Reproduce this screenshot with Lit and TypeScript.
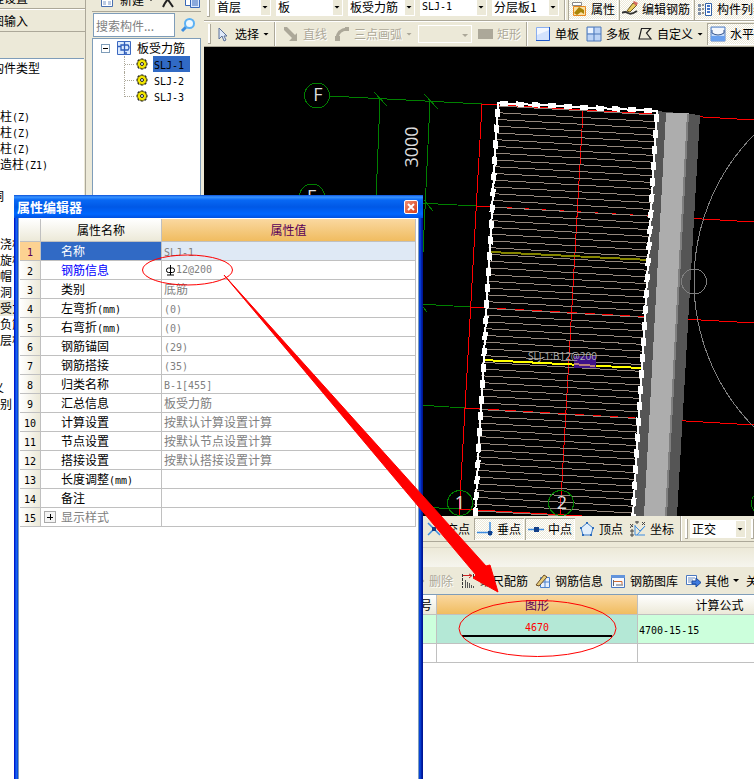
import { LitElement, html, svg, css, nothing, TemplateResult } from "lit";
import { customElement } from "lit/decorators.js";
import { classMap } from "lit/directives/class-map.js";

/** Wraps Latin runs so that they take half the width of a Chinese character. */
const mixed = (text: string) =>
  text
    .split(/([\x21-\x7e]+)/)
    .filter((s) => s !== "")
    .map((s) => (/^[\x21-\x7e]/.test(s) ? html`<span class="latin">${s}</span>` : s));

const base = css`
  * {
    box-sizing: border-box;
  }
  :host {
    font: 12px/16px "Noto Sans CJK SC", "Liberation Sans", sans-serif;
    color: #000;
  }
  .latin {
    font-family: "DejaVu Sans Mono", "Liberation Mono", monospace;
    font-size: 10px;
    line-height: 12px;
  }
  button,
  select,
  input {
    font: inherit;
    color: inherit;
    margin: 0;
    padding: 0;
    border: 0;
    border-radius: 0;
    background: none;
  }
  svg {
    display: block;
    flex: none;
  }
  table {
    border-collapse: separate;
    border-spacing: 0;
    table-layout: fixed;
  }
  th {
    font-weight: normal;
  }
`;

const bars = css`
  .bar {
    display: flex;
    align-items: center;
    gap: 1px;
    background: #ece9d8;
    white-space: nowrap;
    overflow: hidden;
    flex: none;
  }
  .tool {
    display: flex;
    align-items: center;
    gap: 4px;
    height: 22px;
    padding: 0 3px;
    flex: none;
  }
  .tool.on {
    background: repeating-conic-gradient(#fff 0 25%, #ece9d8 0 50%) 0 0 / 2px 2px;
    box-shadow: inset 1px 1px 0 #aca899, inset -1px -1px 0 #fff;
  }
  .tool:disabled {
    color: #aca899;
    text-shadow: 1px 1px 0 #fff;
  }
  .caret {
    width: 6px;
    height: 3px;
    background: currentColor;
    clip-path: polygon(0 0, 100% 0, 50% 100%);
  }
  .sep {
    align-self: stretch;
    width: 2px;
    background: #aca899;
    border-right: 1px solid #fff;
    flex: none;
  }
  .grip {
    width: 3px;
    height: 20px;
    border: 1px solid #aca899;
    border-width: 0 1px 1px 0;
    background: #fff;
    flex: none;
  }
  .combo {
    position: relative;
    display: flex;
    align-items: center;
    height: 18px;
    background: #fff;
    flex: none;
  }
  .combo select {
    appearance: none;
    width: 100%;
    height: 16px;
    padding-left: 2px;
  }
  .combo select.latin {
    font-size: 10px;
  }
  .combo::after {
    content: "";
    position: absolute;
    right: 1px;
    top: 1px;
    bottom: 1px;
    width: 9px;
    background: #ece9d8;
    pointer-events: none;
  }
  .combo .caret {
    position: absolute;
    right: 3px;
    top: 8px;
    z-index: 1;
    pointer-events: none;
  }
  .combo.empty {
    background: #ece9d8;
    border: 1px solid #fff;
    color: #aca899;
  }
`;

const icon = (name: string): TemplateResult => {
  const shapes: Record<string, TemplateResult> = {
    cursor: svg`<path d="M4 2v11l3-3 2 5 2-1-2-4h3z" fill="#dfe9fa" stroke="#5a7098"/>`,
    line: svg`<path d="M1 1l3 0 8 8 2-2v8H6l3-3-8-8z" fill="#aca899"/>`,
    arc: svg`<path d="M3 12Q4 4 13 3" fill="none" stroke="#aca899" stroke-width="3"/><path d="M1 10h5v5H1zM11 1h4v4h-4z" fill="#aca899"/>`,
    rect: svg`<path d="M1 3h15v10H1z" fill="#aca899"/>`,
    slab: svg`<path d="M1.500 1.500h13v13h-13z" fill="#f4f8ff" stroke="#8aaef0"/><path d="M2 14V9l12-5v10z" fill="#d4e3fd"/><path d="M14.500 1v13.500H1" fill="none" stroke="#2058c8"/>`,
    slabs: svg`<path d="M1 1h14v14H1z" fill="#bcd3f5" stroke="#4c78ba"/><path d="M2 2h5v5H2z" fill="#eef5ff"/><path d="M8 1v14M1 8h14" stroke="#4c78ba"/>`,
    poly: svg`<path d="M4.500 2.500h9l-4 4.500 4.500 6h-12z" fill="none" stroke="#222" stroke-width="1.200"/>`,
    level: svg`<path d="M1 1h14v14H1z" fill="#c6dcfb" stroke="#5880c0"/><path d="M1 10h14v5H1z" fill="#6aa0ee"/><path d="M2 2h12v5q-6 4-12 0z" fill="#f4f7fd"/><path d="M2 4v3q6 4 12 0V4" fill="none" stroke="#35558c"/>`,
    props: svg`<path d="M1.500 1.500h9v3h-9z" fill="#fff" stroke="#888"/><path d="M2.500 5.500h12v9h-12z" fill="#fbe0a0" stroke="#e88820"/><path d="M3 12l5-6 5 3v4l-3-2-4 3z" fill="#a88408"/>`,
    edit: svg`<path d="M0 12q3-2 6 0t9-2" fill="none" stroke="#333" stroke-width="2"/><path d="M5 10l6-8 4 2-7 7z" fill="#e8cc60" stroke="#6c5820"/><path d="M11 1l1-1 4 2-2 3z" fill="#d66a60"/>`,
    list: svg`<path d="M8.500 2.500h6v12h-6z" fill="#fff" stroke="#3262a8"/><path d="M10 5h3M10 8h3M10 11h3" stroke="#4274c8" stroke-width="2"/><path d="M1 3h3v3H1zM1 7h3v3H1zM1 11h3v3H1z" fill="#8090a8"/><path d="M5 4h2M5 8h2M5 12h2" stroke="#333"/>`,
    cross: svg`<path d="M2 2l12 12M14 2L2 14" stroke="#3c8ce0" stroke-width="1.500"/><path d="M6 6h4v4H6z" fill="#123f88"/>`,
    perp: svg`<path d="M13 1v14M0 11.500h16" stroke="#3c8ce0" stroke-width="1.500"/><path d="M11 10h4v4h-4z" fill="#123f88"/>`,
    mid: svg`<path d="M0 8.500h16" stroke="#3c8ce0" stroke-width="1.500"/><path d="M6 6h5v5H6z" fill="#123f88"/>`,
    vertex: svg`<path d="M8 2l6 5-2 7H4L2 7z" fill="#e3effb" stroke="#3c7ccb"/><path d="M7 1h2v2H7zM1 6h2v2H1zM13 6h2v2h-2zM3 13h2v2H3zM11 13h2v2h-2z" fill="#2c6cbb"/>`,
    coord: svg`<path d="M5 4v10h10M5 5l5 5 5-5M7 14l8-9" fill="none" stroke="#3c8ce0"/><path d="M0 3l3 3M3 3L0 7M12 1l3 3M15 1l-3 3M1 9h2v2H1zM6 0h2v2H6zM1 13h2v2H1z" fill="none" stroke="#444"/>`,
    minus: svg`<path d="M1 8h13M11 5l3 3-3 3" fill="none" stroke="#aca899" stroke-width="2"/>`,
    scale: svg`<path d="M2.500 1v14" stroke="#333" stroke-dasharray="3 1"/><path d="M3 2.500h9" stroke="#c22"/><path d="M13.500 1v4" stroke="#333"/><path d="M9 1l3 1.500L9 5" stroke="#c22" fill="none"/><path d="M5.500 7v8M7.500 9v6M9.500 10v5M11.500 12v3M13.500 13v2" stroke="#555"/>`,
    info: svg`<path d="M5.500 4.500h9v10h-9z" fill="#e6f0fd" stroke="#4c82cc"/><path d="M5 9h9M10 5v9" stroke="#4c82cc"/><path d="M1 12l8-10 3 2-8 9z" fill="#e6cc78" stroke="#6a4c28"/>`,
    library: svg`<path d="M1.500 2.500h13v12h-13z" fill="#f6f9ff" stroke="#4a78c0"/><path d="M1 2h14v3H1z" fill="#6294dc"/><path d="M4 8.500h8v3" fill="none" stroke="#d26a30"/><path d="M3.500 7v6M13 12H6" stroke="#666" fill="none"/>`,
    other: svg`<path d="M1.500 2.500h10v9h-10z" fill="#fff" stroke="#4a78c0"/><path d="M3 5h7M3 7h5M3 9h4" stroke="#6a8cc0"/><path d="M7 8h4V5l5 4.500-5 4.500v-3H7z" fill="#3f7be0" stroke="#1d4a9c"/>`,
    sheet: svg`<path d="M1.500 1.500h11v13h-11z" fill="#fff" stroke="#4a70b0"/><path d="M1 1h12v7H1z" fill="#7ba0dc"/><path d="M3 10h3M8 10h3M3 12h3M8 12h3" stroke="#7a98c8"/>`,
    remove: svg`<path d="M3 2l9 13M12 2Q5 8 2 15" fill="none" stroke="#222" stroke-width="2"/>`,
    copy: svg`<path d="M1.500 4.500h8v9h-8z" fill="#fff" stroke="#3868b8"/><path d="M6.500 6.500h9v9h-9z" fill="#dce9ff" stroke="#3868b8"/><path d="M8 9h6M8 11h6M8 13h6" stroke="#3868b8"/>`,
    search: svg`<path d="M6 10L2 14" stroke="#3d8ee0" stroke-width="3"/><circle cx="9.500" cy="6.500" r="4.500" fill="#eef8ff" stroke="#5cb1f4" stroke-width="2"/>`,
    rebar: svg`<path d="M1.500 1.500h13v13h-13z" fill="#dcebff" stroke="#3c68c0"/><path d="M2 6.500h3M5 5h7q2 2.500 0 5H5zM8.500 2v12M8 13h3" fill="none" stroke="#2e5cb8" stroke-width="1.300"/>`,
    gear: svg`<path d="M8 2.500v11M2.500 8h11M4 4l8 8M12 4l-8 8" stroke="#222" stroke-width="2.500"/><circle cx="8" cy="8" r="4.500" fill="#f4e800" stroke="#5c5600" stroke-dasharray="2 1.500"/><circle cx="8" cy="8" r="1.500" fill="#fff" stroke="#222"/>`,
  };
  return html`<svg width="16" height="16" viewBox="0 0 16 16" aria-hidden="true">${shapes[name]}</svg>`;
};

interface Tool {
  icon?: string;
  text: string;
  on?: boolean;
  off?: boolean;
  menu?: boolean;
}

const tool = (t: Tool) => html`
  <button class=${classMap({ tool: true, on: !!t.on })} ?disabled=${t.off}>
    ${t.icon ? icon(t.icon) : nothing}<span>${t.text}</span>${t.menu ? html`<i class="caret"></i>` : nothing}
  </button>
`;

const combo = (label: string, value: string, size = "") => html`
  <span class="combo ${size}">
    <select aria-label=${label} class=${/^[\x21-\x7e]+$/.test(value) ? "latin" : ""}>
      <option>${value}</option>
    </select>
    <i class="caret"></i>
  </span>
`;

@customElement("module-list")
class ModuleList extends LitElement {
  static styles = [
    base,
    css`
      :host {
        display: flex;
        flex-direction: column;
        width: 86px;
        flex: none;
        overflow: hidden;
        background: #ece9d8;
        border-right: 1px solid #aca899;
      }
      .head {
        display: block;
        height: 23px;
        flex: none;
        padding-left: 0;
        text-align: left;
        border-bottom: 1px solid #aca899;
        border-top: 1px solid #fff;
        text-indent: -8px;
        line-height: 21px;
      }
      .head.first {
        margin-top: -14px;
      }
      ul {
        flex: 1;
        margin: 26px 1px 0 0;
        padding: 1px 0 0;
        list-style: none;
        background: #fff;
        border-top: 1px solid #7f9db9;
        white-space: nowrap;
      }
      li {
        height: 16px;
      }
      .group {
        text-indent: -8px;
      }
      .current {
        background: #ece9d8;
      }
    `,
  ];
  private rows = [
    "构件类型", "", "", " 柱(Z)", " 柱(Z)", " 柱(Z)", " 造柱(Z1)", "", "洞", "", "",
    " 浇板", " 旋板", " 帽", " 洞", " 受力", " 负筋", " 层板", "", "", "义", " 别",
  ];
  render() {
    return html`
      <button class="head first">程设置</button>
      <button class="head">图输入</button>
      <ul>
        ${this.rows.map(
          (r) => html`<li class=${classMap({ group: !r.startsWith(" "), current: r === " 受力" })}>${mixed(r.trim())}</li>`
        )}
      </ul>
    `;
  }
}

@customElement("component-tree")
class ComponentTree extends LitElement {
  static styles = [
    base,
    bars,
    css`
      :host {
        display: flex;
        flex-direction: column;
        width: 109px;
        flex: none;
        margin-left: 6px;
        background: #ece9d8;
      }
      .actions {
        height: 24px;
        margin-top: -12px;
        padding-left: 5px;
        border-bottom: 1px solid #aca899;
      }
      .find {
        display: flex;
        height: 26px;
        align-items: center;
        padding: 1px 0 1px 1px;
        flex: none;
      }
      input {
        flex: 1;
        min-width: 0;
        height: 24px;
        padding: 0 2px;
        background: #fff;
        border: 1px solid #7f9db9;
      }
      input::placeholder {
        color: #808080;
      }
      .find button {
        padding: 0 5px;
      }
      .tree {
        flex: 1;
        background: #fff;
        border: 1px solid #7f9db9;
        padding: 1px 0 0 8px;
      }
      ul {
        list-style: none;
        margin: 0;
        padding: 0;
      }
      .root,
      li li {
        display: flex;
        align-items: center;
        height: 16px;
      }
      .root {
        gap: 5px;
      }
      .toggle {
        width: 9px;
        height: 9px;
        border: 1px solid #7f9db9;
        display: grid;
        place-items: center;
        margin-right: 1px;
      }
      .toggle::before {
        content: "";
        width: 5px;
        height: 1px;
        background: #000;
      }
      li ul {
        margin-left: 23px;
      }
      .branch {
        align-self: stretch;
        width: 10px;
        border-left: 1px dotted #aca899;
        background: repeating-linear-gradient(90deg, #aca899 0 1px, #fff 1px 2px) 0 8px / 100% 1px no-repeat;
      }
      li li:last-child .branch {
        height: 9px;
      }
      li a {
        color: #000;
        text-decoration: none;
        margin-left: 3px;
        padding: 0 6px 0 1px;
        height: 16px;
        white-space: nowrap;
      }
      li .picked {
        background: #316ac5;
      }
    `,
  ];
  render() {
    return html`
      <div class="bar actions">
        ${tool({ icon: "sheet", text: "新建", menu: true })}
        <button class="tool" aria-label="删除">${icon("remove")}</button>
        <button class="tool" aria-label="复制">${icon("copy")}</button>
      </div>
      <div class="find">
        <input type="search" aria-label="搜索构件" placeholder="搜索构件..." />
        <button aria-label="搜索">${icon("search")}</button>
      </div>
      <nav class="tree">
        <ul>
          <li>
            <div class="root"><button class="toggle" aria-label="折叠"></button>${icon("rebar")}<span>板受力筋</span></div>
            <ul>
              ${["SLJ-1", "SLJ-2", "SLJ-3"].map(
                (n, i) => html`<li><i class="branch"></i>${icon("gear")}<a href="#${n}" class=${i === 0 ? "picked" : ""}>${mixed(n)}</a></li>`
              )}
            </ul>
          </li>
        </ul>
      </nav>
    `;
  }
}

@customElement("plan-view")
class PlanView extends LitElement {
  static styles = [
    base,
    css`
      :host {
        display: block;
        background: #000;
        flex: none;
      }
      .plan {
        width: 100%;
        height: 469px;
      }
      .axis {
        fill: none;
        stroke: #008000;
      }
      .grid {
        fill: none;
        stroke: #f00;
      }
      .bar-line {
        stroke: #94877d;
      }
      .ring {
        fill: none;
        stroke: #808080;
      }
      .mark {
        font: 18px "Open Sans", sans-serif;
        fill: #ddd;
        text-anchor: middle;
      }
      .tag {
        font: 10px "Open Sans", sans-serif;
        fill: #b0b0b0;
      }
    `,
  ];
  render() {
    const bars = Array.from({ length: 66 }, (_, i) => {
      const y = 97 + i * 6.77;
      return svg`<path class="bar-line" d="M460 ${y}L670 ${y + 12}"/>`;
    });
    const outline = "M475 516L498 103L657 111L633 516";
    return html`
      <svg class="plan" viewBox="204 47 550 469" preserveAspectRatio="xMinYMin slice" role="img" aria-label="板受力筋平面图">
        <defs>
          <clipPath id="slab"><path d="M473 516L497 104L657 112L634 516z" /></clipPath>
        </defs>
        <g shape-rendering="crispEdges">
          <path
            class="axis"
            d="M330 96L482 104M380 99L376 200M430 102L423 252M374 92L387 106M424 94L438 109M418 203L477 206M424 200L433 211M418 304L471 307M423 307L427 312M418 405L465 408M418 507L460 509"
          />
          <path
            class="grid"
            d="M482 104L754 120M477 206L754 222M471 307L754 323M465 408L754 425M460 509L582 516M482 104L459 516M583 111L560 516"
          />
          <g clip-path="url(#slab)">${bars}</g>
          <path d="M657 111L700 115L677 516H633z" fill="#555" />
          <path d="M666 112.500L689 113.500L666 516H644z" fill="#adadad" />
          <path d="M687 113.500H689L667 516H665z" fill="#808080" />
          <path d="M491 252L650 260" stroke="#858500" stroke-width="2" />
          <path d="M483 360L641 368" stroke="#ff0" stroke-width="2" />
          <path d=${outline} fill="none" stroke="#fff" stroke-width="2" />
          <path d=${outline} fill="none" stroke="#fff" stroke-width="5" stroke-dasharray="8 8" />
          <path d="M574 356h22v12h-22z" fill="#3d1188" />
          <path d="M574 364L595 366" stroke="#b8807a" stroke-width="2" />
          <circle class="axis" cx="317" cy="95.500" r="12.500" />
          <circle class="axis" cx="312" cy="196.500" r="12.500" />
          <circle class="axis" cx="460" cy="503" r="12.500" />
          <circle class="axis" cx="561" cy="503" r="12.500" />
          <circle class="axis" cx="764" cy="503" r="12.500" />
          <circle class="ring" cx="694" cy="281.500" r="12.500" />
          <circle class="ring" cx="902" cy="281" r="208" />
        </g>
        <text class="mark" x="318" y="101">F</text>
        <text class="mark" x="312" y="203">E</text>
        <text class="mark" x="460" y="509">1</text>
        <text class="mark" x="562" y="509">2</text>
        <text class="mark" transform="translate(418 147) rotate(-90)">3000</text>
        <text class="tag" x="528" y="360">SLJ-1:B12@200</text>
      </svg>
    `;
  }
}

@customElement("property-editor")
class PropertyEditor extends LitElement {
  static styles = [
    base,
    css`
      :host {
        display: flex;
        flex-direction: column;
        background: #fff;
        border: solid #0831d9;
        border-width: 0 4px;
        border-image: linear-gradient(90deg, #0019cf 0 1px, #0a48e0 1px 2px, #1660f0 2px 3px, #0036d0 4px calc(100% - 4px), #0f52e4 calc(100% - 3px), #0028b8 calc(100% - 2px), #00108a) 0 4;
      }
      header {
        display: flex;
        align-items: center;
        justify-content: space-between;
        height: 23px;
        margin: 0 -4px;
        padding: 1px 5px 0 3px;
        background: linear-gradient(#0a50d8, #3a94ff 2px, #0868f4 5px, #0058e6 12px, #0066ff 19px, #0050e0);
        flex: none;
      }
      h2 {
        margin: 0;
        font-size: 13px;
        line-height: 16px;
        font-weight: bold;
        color: #fff;
      }
      .close {
        width: 14px;
        height: 14px;
        display: grid;
        place-items: center;
        border: 1px solid #fff;
        border-radius: 2px;
        background: linear-gradient(135deg, #f09070, #d83c18);
      }
      .body {
        flex: 1;
        padding: 1px 2px 0 1px;
        border: solid #7f9db9;
        border-width: 0 1px;
      }
      table {
        width: 100%;
        white-space: nowrap;
      }
      .c1 {
        width: 21px;
      }
      .c2 {
        width: 121px;
      }
      th,
      td {
        height: 19px;
        padding: 0;
        line-height: 18px;
        border: solid #c0c0c0;
        border-width: 0 1px 1px 0;
        text-align: left;
      }
      thead th {
        height: 23px;
        text-align: center;
        background: linear-gradient(#fff, #ece9d8);
      }
      thead .hot {
        background: linear-gradient(#fad8a0, #f0bc60);
        color: #580058;
      }
      tbody .num {
        text-align: center;
        background: linear-gradient(90deg, #fff, #ece9d8);
      }
      .name {
        padding-left: 20px;
        position: relative;
      }
      .value {
        padding-left: 2px;
        color: #808080;
      }
      .sel .num {
        background: #fcd292;
        color: #580058;
      }
      .sel .name {
        background: #316ac5;
        color: #fff;
      }
      .sel .value {
        background: #dfe9f5;
      }
      .key .name {
        color: #00f;
      }
      .faint .name {
        color: #808080;
      }
      .plus {
        position: absolute;
        left: 3px;
        top: 3px;
        width: 12px;
        height: 12px;
        border: 1px solid #aaa;
        background: linear-gradient(#000, #000) center / 6px 1px no-repeat, linear-gradient(#000, #000) center / 1px 6px no-repeat, #f4f4f4;
      }
      .bar {
        display: flex;
        align-items: center;
        padding-left: 1px;
      }
    `,
  ];
  private rows: [string, string, string?][] = [
    ["名称", "SLJ-1", "sel"],
    ["钢筋信息", "12@200", "key"],
    ["类别", "底筋"],
    ["左弯折(mm)", "(0)"],
    ["右弯折(mm)", "(0)"],
    ["钢筋锚固", "(29)"],
    ["钢筋搭接", "(35)"],
    ["归类名称", "B-1[455]"],
    ["汇总信息", "板受力筋"],
    ["计算设置", "按默认计算设置计算"],
    ["节点设置", "按默认节点设置计算"],
    ["搭接设置", "按默认搭接设置计算"],
    ["长度调整(mm)", ""],
    ["备注", ""],
    ["显示样式", "", "faint"],
  ];
  render() {
    const bar = html`<svg width="11" height="11" viewBox="0 0 11 11" aria-label="HRB335">
      <path d="M5.500 0v10M2 10h7" stroke="#000" />
      <rect x="1.500" y="3" width="8" height="4.500" rx="2" fill="none" stroke="#000" />
    </svg>`;
    return html`
      <header>
        <h2>属性编辑器</h2>
        <button class="close" aria-label="关闭">
          <svg width="8" height="8" viewBox="0 0 8 8"><path d="M1 1l6 6M7 1L1 7" stroke="#fff" stroke-width="2" /></svg>
        </button>
      </header>
      <div class="body">
        <table>
          <colgroup><col class="c1" /><col class="c2" /><col /></colgroup>
          <thead>
            <tr><th></th><th>属性名称</th><th class="hot">属性值</th></tr>
          </thead>
          <tbody>
            ${this.rows.map(
              ([name, value, kind], i) => html`<tr class=${kind ?? ""}>
                <td class="num">${mixed(String(i + 1))}</td>
                <th class="name" scope="row">
                  ${kind === "faint" ? html`<button class="plus" aria-label="展开"></button>` : nothing}${mixed(name)}
                </th>
                <td class="value">
                  ${kind === "key" ? html`<div class="bar">${bar}${mixed(value)}</div>` : mixed(value)}
                </td>
              </tr>`
            )}
          </tbody>
        </table>
      </div>
    `;
  }
}

@customElement("rebar-panel")
class RebarPanel extends LitElement {
  static styles = [
    base,
    bars,
    css`
      :host {
        display: flex;
        flex-direction: column;
        flex: 1;
        min-width: 0;
        background: #fff;
        overflow: hidden;
      }
      .caption {
        height: 20px;
        margin-top: 5px;
        background: linear-gradient(#ece9d8, #f6f5ee);
        border-top: 1px solid #d8d4c4;
      }
      .top {
        display: flow-root;
        background: #ece9d8;
        flex: none;
      }
      .tools {
        height: 28px;
        padding-left: 202px;
        border-bottom: 1px solid #7f9db9;
      }
      table {
        width: 700px;
        white-space: nowrap;
      }
      .no {
        width: 233px;
      }
      .shape {
        width: 201px;
      }
      .calc {
        width: 164px;
      }
      th,
      td {
        padding: 0 1px;
        border: solid #c0c0c0;
        border-width: 0 1px 1px 0;
        text-align: left;
      }
      thead th {
        height: 20px;
        text-align: center;
        background: linear-gradient(#fff, #ece9d8);
      }
      thead th:first-child {
        text-align: right;
        padding-right: 4px;
      }
      thead .hot {
        background: linear-gradient(#fad8a0, #f0bc60);
        color: #580058;
      }
      .first td {
        height: 29px;
        background: #ccffdc;
      }
      .first .drawn {
        background: #b4e8d6;
      }
      .blank td {
        height: 19px;
      }
      .bar-shape {
        display: flex;
        flex-direction: column;
        align-items: center;
        gap: 1px;
        color: #f00;
      }
      .bar-shape::after {
        content: "";
        width: 150px;
        height: 2px;
        background: #000;
      }
    `,
  ];
  render() {
    const tools: Tool[] = [
      { icon: "minus", text: "删除", off: true },
      { icon: "scale", text: "缩尺配筋" },
      { icon: "info", text: "钢筋信息" },
      { icon: "library", text: "钢筋图库" },
      { icon: "other", text: "其他", menu: true },
      { text: "关闭" },
    ];
    return html`
      <div class="top"><div class="caption"></div></div>
      <div class="bar tools">${tools.map(tool)}</div>
      <table>
        <colgroup><col class="no" /><col class="shape" /><col class="calc" /><col /></colgroup>
        <thead>
          <tr><th>筋号</th><th class="hot">图形</th><th>计算公式</th><th></th></tr>
        </thead>
        <tbody>
          <tr class="first">
            <td></td>
            <td class="drawn"><div class="bar-shape">${mixed("4670")}</div></td>
            <td>${mixed("4700-15-15")}</td>
            <td></td>
          </tr>
          <tr class="blank"><td></td><td></td><td></td><td></td></tr>
        </tbody>
      </table>
    `;
  }
}

@customElement("app-root")
class AppRoot extends LitElement {
  static styles = [
    base,
    bars,
    css`
      :host {
        position: relative;
        display: flex;
        min-height: 100vh;
        overflow: hidden;
        background: #ece9d8;
      }
      main {
        flex: 1;
        min-width: 0;
        display: flex;
        flex-direction: column;
        margin-left: 3px;
      }
      .scope {
        height: 28px;
        margin-top: -7px;
        padding-left: 3px;
        gap: 5px;
        border-bottom: 1px solid #aca899;
      }
      .group {
        display: flex;
        gap: 1px;
        align-self: flex-end;
        margin-left: -3px;
      }
      .draw {
        height: 26px;
        padding-left: 4px;
        border-top: 1px solid #fff;
        border-bottom: 1px solid #aca899;
      }
      .short {
        width: 56px;
      }
      .long {
        width: 67px;
      }
      .empty {
        width: 54px;
        margin: 0 1px 0 2px;
      }
      .draw .sep {
        margin: 0 3px 0 1px;
      }
      .snap {
        height: 26px;
        padding-left: 219px;
        border-bottom: 1px solid #aca899;
      }
      .snap .combo {
        margin: 0 4px 0 1px;
      }
      .snap .sep {
        margin: 0 2px;
      }
      property-editor {
        position: absolute;
        left: 14px;
        top: 195px;
        bottom: 0;
        width: 409px;
      }
      .notes {
        position: absolute;
        left: 0;
        top: 0;
        width: 754px;
        height: 779px;
        pointer-events: none;
      }
    `,
  ];
  render() {
    const draw: (Tool | "sep" | "combo")[] = [
      { icon: "cursor", text: "选择", menu: true },
      "sep",
      { icon: "line", text: "直线", off: true },
      { icon: "arc", text: "三点画弧", off: true, menu: true },
      "combo",
      { icon: "rect", text: "矩形", off: true },
      "sep",
      { icon: "slab", text: "单板" },
      { icon: "slabs", text: "多板" },
      { icon: "poly", text: "自定义", menu: true },
      { icon: "level", text: "水平", on: true },
    ];
    const snap: Tool[] = [
      { icon: "cross", text: "交点" },
      { icon: "perp", text: "垂点", on: true },
      { icon: "mid", text: "中点", on: true },
      { icon: "vertex", text: "顶点" },
      { icon: "coord", text: "坐标" },
    ];
    return html`
      <module-list></module-list>
      <component-tree></component-tree>
      <main>
        <div class="bar scope">
          <i class="grip"></i>
          ${combo("楼层", "首层", "short")} ${combo("构件类别", "板", "long")} ${combo("构件类型", "板受力筋", "long")}
          ${combo("构件", "SLJ-1", "long")} ${combo("分层", "分层板1", "long")}
          <i class="sep"></i>
          <div class="group">
            ${[
              { icon: "props", text: "属性", on: true },
              { icon: "edit", text: "编辑钢筋", on: true },
              { icon: "list", text: "构件列表", on: true },
            ].map(tool)}
          </div>
        </div>
        <div class="bar draw">
          <i class="grip"></i>
          ${draw.map((d) =>
            d === "sep" ? html`<i class="sep"></i>` : d === "combo" ? combo("画弧方式", "", "empty") : tool(d)
          )}
        </div>
        <plan-view></plan-view>
        <div class="bar snap">
          ${snap.map(tool)}<i class="sep"></i><i class="grip"></i>${combo("捕捉", "正交", "short")}<i class="grip"></i>
        </div>
        <rebar-panel></rebar-panel>
      </main>
      <property-editor></property-editor>
      <svg class="notes" viewBox="0 0 754 779" aria-hidden="true">
        <g fill="none" stroke="#f00">
          <ellipse cx="187.500" cy="270" rx="45" ry="15" />
          <ellipse cx="537.500" cy="628.500" rx="78.500" ry="28" />
        </g>
        <path d="M224 275L486 566L490 565L498 592L473 578L476 575z" fill="#f00" stroke="#f00" />
      </svg>
    `;
  }
}
